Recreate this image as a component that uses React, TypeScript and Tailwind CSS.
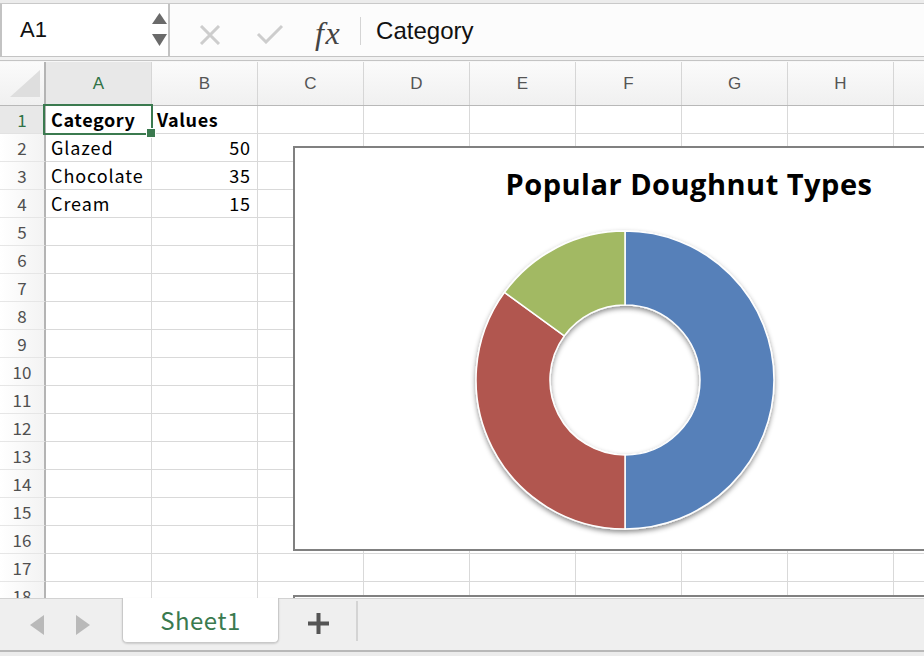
import React from "react";

const cols = ["A", "B", "C", "D", "E", "F", "G", "H", "I"];
const data: Record<number, [string, string]> = {
  1: ["Category", "Values"],
  2: ["Glazed", "50"],
  3: ["Chocolate", "35"],
  4: ["Cream", "15"],
};
const rows = Array.from({ length: 18 }, (_, i) => i + 1);

function Doughnut() {
  return (
    <svg width="320" height="320" viewBox="0 0 320 320">
      <defs>
        <filter id="sh" x="-20%" y="-20%" width="140%" height="140%">
          <feDropShadow dx="0" dy="2.5" stdDeviation="2.5" floodColor="#000" floodOpacity="0.45" />
        </filter>
      </defs>
      <g filter="url(#sh)" stroke="#ffffff" strokeWidth="1.5" strokeLinejoin="round">
        <path d="M160,11 A149,149 0 0 1 160,309 L160,235 A75,75 0 0 0 160,85 Z" fill="#5680b9" />
        <path d="M160,309 A149,149 0 0 1 39.5,72.4 L99.3,115.9 A75,75 0 0 0 160,235 Z" fill="#b1574f" />
        <path d="M39.5,72.4 A149,149 0 0 1 160,11 L160,85 A75,75 0 0 0 99.3,115.9 Z" fill="#a2b964" />
      </g>
    </svg>
  );
}

export default function App() {
  return (
    <div className="relative w-[924px] h-[656px] overflow-hidden bg-white flex flex-col font-['Liberation_Sans',Arial,sans-serif]">
      {/* Formula bar */}
      <div className="h-[62px] shrink-0 flex flex-col bg-[#ececec]">
        <div className="h-[3px]" />
        <div className="h-[1px] bg-[#c9c9c9]" />
        <div className="h-[52px] flex bg-[#fcfcfc]">
          <div className="w-[170px] h-full bg-white border-l-2 border-r-2 border-[#c3c3c3] flex items-start">
            <span className="ml-[18px] mt-[12px] text-[22px] leading-[28px] text-[#111]">A1</span>
            <div className="ml-auto mr-[1px] flex flex-col">
              <svg width="15" height="11" viewBox="0 0 15 11" className="mt-[9px]">
                <polygon points="7.5,0 15,11 0,11" fill="#6a6a6a" />
              </svg>
              <svg width="15" height="12" viewBox="0 0 15 12" className="mt-[10px]">
                <polygon points="0,0 15,0 7.5,12" fill="#6a6a6a" />
              </svg>
            </div>
          </div>
          <div className="flex-1 flex items-start">
            <svg width="22" height="20" viewBox="0 0 22 20" className="ml-[29px] mt-[21px]">
              <path d="M2,1 L20,19 M20,1 L2,19" stroke="#cdcdcd" strokeWidth="3" />
            </svg>
            <svg width="28" height="20" viewBox="0 0 28 20" className="ml-[35px] mt-[20px]">
              <path d="M2,10 L10,18 L26,2" stroke="#cdcdcd" strokeWidth="3" fill="none" />
            </svg>
            <span className="ml-[31px] mt-[11px] font-['Liberation_Serif',serif] italic text-[32px] leading-[36px] tracking-[1.5px] text-[#444]">
              fx
            </span>
            <div className="ml-[19px] mt-[13px] w-[1px] h-[28px] bg-[#d4d4d4]" />
            <span className="ml-[15px] mt-[12px] text-[24px] leading-[30px] text-[#111]">Category</span>
          </div>
        </div>
        <div className="h-[1px] bg-[#c4c4c4]" />
        <div className="h-[3px] bg-[#f1f1f1]" />
        <div className="h-[1px] bg-[#c4c4c4]" />
        <div className="h-[1px] bg-[#f7f7f7]" />
      </div>

      {/* Column headers */}
      <div className="h-[44px] shrink-0 flex border-b border-[#b8b8b8] bg-gradient-to-b from-[#fbfbfb] to-[#f0f0f0]">
        <div className="w-[46px] shrink-0 border-r-2 border-[#b4b4b4]">
          <svg width="44" height="43" viewBox="0 0 44 43">
            <polygon points="10,35 40,35 40,8" fill="#dedede" />
          </svg>
        </div>
        {cols.map((c) => (
          <div
            key={c}
            className={
              c === "A"
                ? "w-[106px] shrink-0 border-r border-[#d6d6d6] flex items-center justify-center text-[17px] text-[#2f7246] bg-[#e8e8e8]"
                : "w-[106px] shrink-0 border-r border-[#d6d6d6] flex items-center justify-center text-[17px] text-[#555]"
            }
          >
            {c === "I" ? "" : c}
          </div>
        ))}
      </div>

      {/* Grid */}
      <div className="flex-1 overflow-hidden flex flex-col font-['Noto_Sans_CJK_JP',sans-serif]">
        {rows.map((r) => (
          <div key={r} className="h-[28px] shrink-0 flex">
            <div
              className={
                r === 1
                  ? "w-[46px] shrink-0 border-r-2 border-r-[#b4b4b4] border-b border-b-[#e2e2e2] bg-[#e8e8e8] flex items-center justify-center text-[17px] text-[#2f7246]"
                  : "w-[46px] shrink-0 border-r-2 border-r-[#b4b4b4] border-b border-b-[#e6e6e6] bg-gradient-to-r from-[#ffffff] to-[#f3f3f3] flex items-center justify-center text-[17px] text-[#505050]"
              }
            >
              {r}
            </div>
            {cols.map((c, i) => (
              <div
                key={c}
                className={
                  i === 1 && r > 1
                    ? "w-[106px] shrink-0 border-r border-b border-[#d9d9d9] flex items-center justify-end pr-[6px] text-[18px] text-black"
                    : "w-[106px] shrink-0 border-r border-b border-[#d9d9d9] flex items-center pl-[5px] text-[18px] text-black"
                }
              >
                {data[r] && i < 2 ? (
                  <span className={r === 1 ? "font-bold tracking-[0.6px]" : "tracking-[0.9px]"}>{data[r][i]}</span>
                ) : null}
              </div>
            ))}
          </div>
        ))}
      </div>

      {/* Sheet tabs */}
      <div className="relative z-10 h-[58px] shrink-0 flex flex-col bg-[#efefef]">
        <div className="h-[52px] flex items-start border-t border-[#d2d2d2]">
          <svg width="14" height="20" viewBox="0 0 14 20" className="ml-[30px] mt-[16px]">
            <polygon points="14,0 14,20 0,10" fill="#b9b9b9" />
          </svg>
          <svg width="14" height="20" viewBox="0 0 14 20" className="ml-[32px] mt-[16px]">
            <polygon points="0,0 0,20 14,10" fill="#b9b9b9" />
          </svg>
          <div className="ml-[32px] -mt-[1px] w-[157px] h-[45px] bg-white border border-t-0 border-[#c9c9c9] rounded-b-[5px] shadow-[0_1px_2px_rgba(0,0,0,0.15)] flex items-center justify-center">
            <span className="font-['Noto_Sans_CJK_JP',sans-serif] text-[24px] text-[#3a7a4f] tracking-[0.5px]">Sheet1</span>
          </div>
          <svg width="21" height="21" viewBox="0 0 21 21" className="ml-[29px] mt-[14px]">
            <path d="M10.5,0 V21 M0,10.5 H21" stroke="#555" strokeWidth="4" />
          </svg>
          <div className="ml-[27px] mt-[2px] w-[2px] h-[40px] bg-[#d4d4d4]" />
        </div>
        <div className="h-[2px] bg-[#b8b8b8]" />
        <div className="flex-1 bg-[#ececec]" />
      </div>

      {/* Selection */}
      <div className="absolute left-[43px] top-[104px] w-[110px] h-[31px] border-2 border-[#3b7a4f]" />
      <div className="absolute left-[146px] top-[128px] w-[10px] h-[10px] bg-[#3b7a4f] border border-white" />

      {/* Chart 1 */}
      <div className="absolute left-[293px] top-[146px] w-[792px] h-[405px] bg-white border-2 border-[#808080] flex flex-col">
        <div className="mt-[17px] h-[38px] text-center font-['Open_Sans',sans-serif] font-bold text-[29px] leading-[38px] tracking-[0.5px] text-black">
          Popular Doughnut Types
        </div>
        <div className="mt-[17px] ml-[170px]">
          <Doughnut />
        </div>
      </div>

      {/* Chart 2 (partially visible) */}
      <div className="absolute left-[293px] top-[595px] w-[792px] h-[200px] bg-white border-2 border-[#808080]" />
    </div>
  );
}
